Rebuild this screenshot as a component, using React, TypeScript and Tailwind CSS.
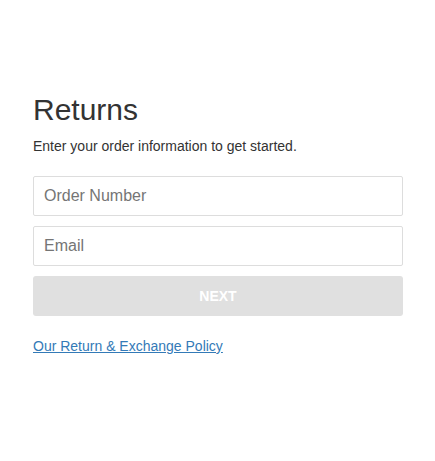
export default function App() {
  return (
    <div className="min-h-screen bg-white font-['Liberation_Sans',Arial,sans-serif]">
      <div className="pl-[33px] pt-[93px] w-[403px]">
        <h1 className="text-[30px] leading-[33px] text-[#333]">Returns</h1>
        <p className="mt-[10px] text-[14px] leading-[20px] text-[#333]">
          Enter your order information to get started.
        </p>
        <form className="mt-[20px] flex flex-col gap-[10px]" onSubmit={(e) => e.preventDefault()}>
          <input
            type="text"
            placeholder="Order Number"
            className="h-[40px] w-full rounded-[2px] border border-[#ddd] px-[10px] text-[16px] text-[#333] placeholder:text-[#757575] outline-none"
          />
          <input
            type="email"
            placeholder="Email"
            className="h-[40px] w-full rounded-[2px] border border-[#ddd] px-[10px] text-[16px] text-[#333] placeholder:text-[#757575] outline-none"
          />
          <button
            type="submit"
            disabled
            className="h-[40px] w-full rounded-[3px] bg-[#e0e0e0] text-[14px] font-bold text-white"
          >
            NEXT
          </button>
        </form>
        <a href="#" className="mt-[20px] inline-block text-[14px] leading-[20px] text-[#337ab7] underline">
          Our Return &amp; Exchange Policy
        </a>
      </div>
    </div>
  );
}
